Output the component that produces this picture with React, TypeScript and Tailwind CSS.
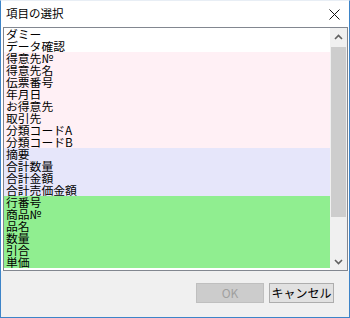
import React from "react";

type Item = { label: string; bg: string };

const items: Item[] = [
  { label: "ダミー", bg: "bg-white" },
  { label: "データ確認", bg: "bg-white" },
  { label: "得意先№", bg: "bg-[#fff0f5]" },
  { label: "得意先名", bg: "bg-[#fff0f5]" },
  { label: "伝票番号", bg: "bg-[#fff0f5]" },
  { label: "年月日", bg: "bg-[#fff0f5]" },
  { label: "お得意先", bg: "bg-[#fff0f5]" },
  { label: "取引先", bg: "bg-[#fff0f5]" },
  { label: "分類コードA", bg: "bg-[#fff0f5]" },
  { label: "分類コードB", bg: "bg-[#fff0f5]" },
  { label: "摘要", bg: "bg-[#e6e6fa]" },
  { label: "合計数量", bg: "bg-[#e6e6fa]" },
  { label: "合計金額", bg: "bg-[#e6e6fa]" },
  { label: "合計売価金額", bg: "bg-[#e6e6fa]" },
  { label: "行番号", bg: "bg-[#90ee90]" },
  { label: "商品№", bg: "bg-[#90ee90]" },
  { label: "品名", bg: "bg-[#90ee90]" },
  { label: "数量", bg: "bg-[#90ee90]" },
  { label: "引合", bg: "bg-[#90ee90]" },
  { label: "単価", bg: "bg-[#90ee90]" },
];

export default function App() {
  return (
    <div
      className="w-[350px] h-[318px] border border-[#3d84c8] border-t-[#e8eef5] bg-[#f0f0f0] flex flex-col overflow-hidden"
      style={{ fontFamily: '"Noto Sans CJK JP", "Noto Sans", sans-serif' }}
    >
      {/* title bar */}
      <div className="h-[26px] bg-white flex items-center justify-between pl-[5px] pr-[9px] shrink-0">
        <span className="text-[11.5px] leading-none text-black">項目の選択</span>
        <svg width="11" height="11" viewBox="0 0 11 11" className="block">
          <path d="M0.5 0.5 L10.5 10.5 M10.5 0.5 L0.5 10.5" stroke="#111" strokeWidth="1" fill="none" />
        </svg>
      </div>
      <div className="bg-white pl-[2px] pr-[1px] shrink-0">
        <div className="h-[244px] border border-[#828790] bg-white flex">
          <div className="flex-1">
            {items.map((it) => (
              <div
                key={it.label}
                className={`${it.bg} h-[12px] pl-[2px] text-[11.8px] leading-[12px] text-black whitespace-nowrap`}
              >
                {it.label}
              </div>
            ))}
          </div>
          {/* scrollbar */}
          <div className="w-[17px] bg-[#f0f0f0] flex flex-col">
            <div className="h-[17px] flex items-center justify-center">
              <svg width="9" height="6" viewBox="0 0 9 6">
                <path d="M1 5 L4.5 1.5 L8 5" stroke="#606060" strokeWidth="1.6" fill="none" />
              </svg>
            </div>
            <div className="mx-[1px] mt-[2px] h-[170px] bg-[#cdcdcd]" />
            <div className="flex-1" />
            <div className="h-[17px] flex items-center justify-center">
              <svg width="9" height="6" viewBox="0 0 9 6">
                <path d="M1 1 L4.5 4.5 L8 1" stroke="#606060" strokeWidth="1.6" fill="none" />
              </svg>
            </div>
          </div>
        </div>
      </div>
      {/* button area */}
      <div className="flex-1 flex justify-end items-start pt-[12px] pr-[15px] gap-[5px]">
        <div className="w-[68px] h-[20px] bg-[#cccccc] border border-[#bfbfbf] flex items-center justify-center text-[12px] leading-none text-[#a0a0a0]">
          OK
        </div>
        <div className="w-[65px] h-[20px] bg-[#e1e1e1] border border-[#adadad] flex items-center justify-center text-[12px] leading-none text-black">
          キャンセル
        </div>
      </div>
    </div>
  );
}
